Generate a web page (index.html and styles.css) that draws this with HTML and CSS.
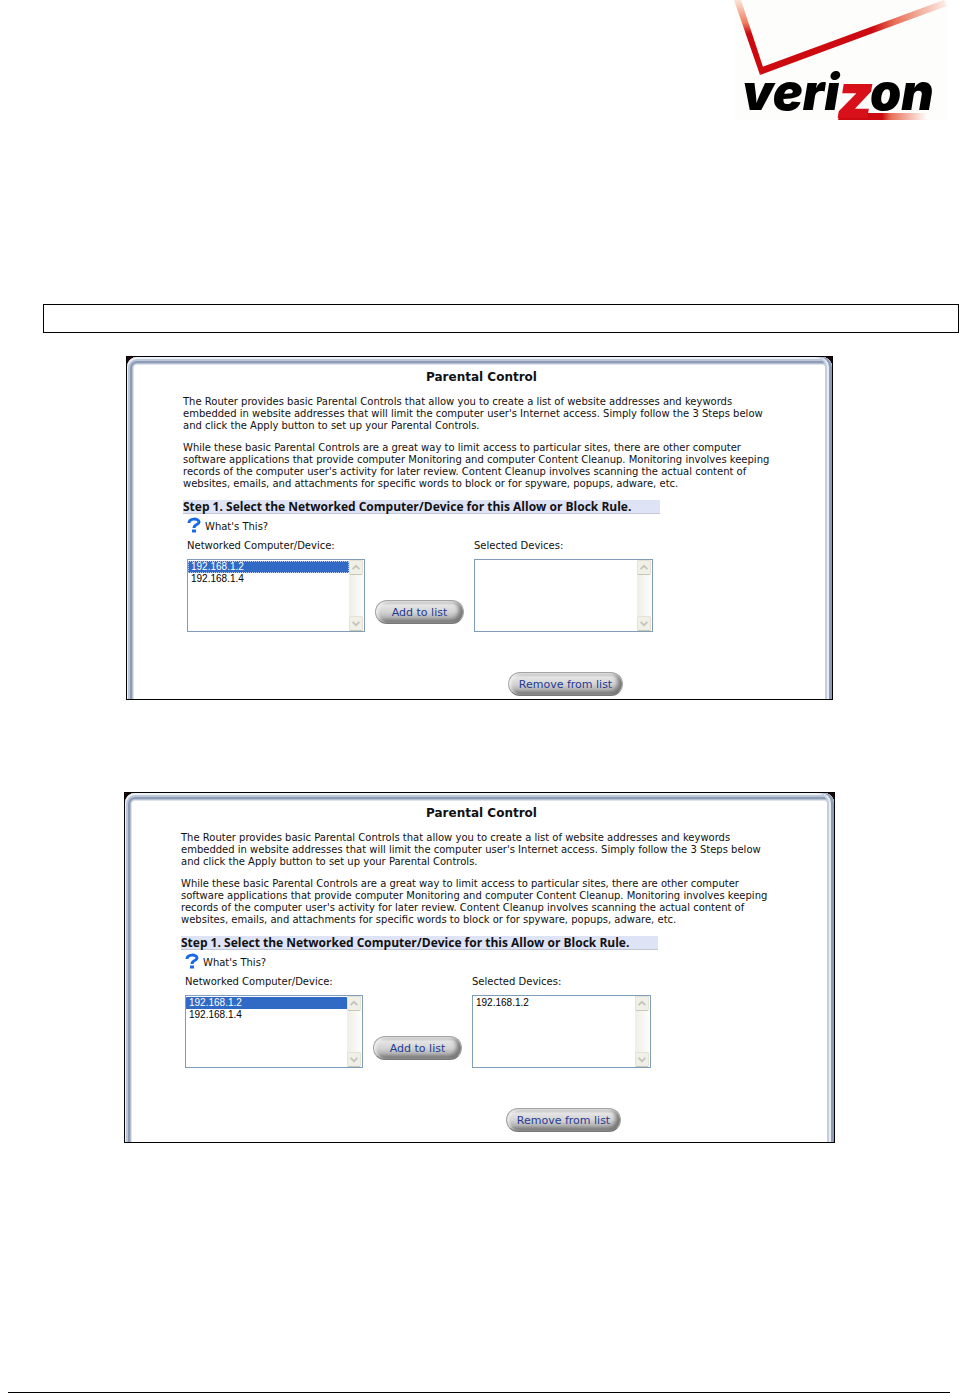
FILE: index.html
```html
<!DOCTYPE html>
<html lang="en">

<head>
    <meta charset="utf-8">
    <title>Parental Control</title>
    <meta name="viewport" content="width=device-width, initial-scale=1.0">
    <link rel="stylesheet" href="styles.css">
</head>

<body>
    <header>
        <svg class="logo" viewBox="0 0 214 120" role="img" aria-label="verizon">
            <defs>
                <linearGradient id="short-stroke" x1="0" y1="0" x2="0" y2="1">
                    <stop offset="0" stop-color="#fbe4d8" />
                    <stop offset="0.3" stop-color="#ee8060" />
                    <stop offset="0.45" stop-color="#cc0a10" />
                </linearGradient>
                <linearGradient id="long-stroke" x1="0" y1="0" x2="1" y2="0">
                    <stop offset="0.6" stop-color="#cc0a10" />
                    <stop offset="0.72" stop-color="#e87058" />
                    <stop offset="1" stop-color="#fdf0e8" />
                </linearGradient>
                <linearGradient id="z-bar" x1="0" y1="0" x2="1" y2="0">
                    <stop offset="0.5" stop-color="#cc0a10" />
                    <stop offset="0.6" stop-color="#e87058" />
                    <stop offset="1" stop-color="#fefaf8" />
                </linearGradient>
            </defs>
            <rect width="214" height="120" fill="#fdfdfb" />
            <path d="M0 0H7L29 67L26 75Z" fill="url(#short-stroke)" />
            <path d="M26 75L28 67L210 0L213 6L142 32Z" fill="url(#long-stroke)" />
            <path d="M106 113H192V120H104Z" fill="url(#z-bar)" />
            <g class="wordmark">
                <text x="8" y="110">veri</text>
                <text x="103" y="118" class="wordmark-z">z</text>
                <text x="136" y="110">on</text>
            </g>
        </svg>
    </header>

    <main>
        <div class="strip"></div>

        <section class="panel">
            <div class="panel-body">
                <h2>Parental Control</h2>
                <p>The Router provides basic Parental Controls that allow you to create a list of website addresses and keywords<br>
                    embedded in website addresses that will limit the computer user's Internet access. Simply follow the 3 Steps below<br>
                    and click the Apply button to set up your Parental Controls.</p>
                <p>While these basic Parental Controls are a great way to limit access to particular sites, there are other computer<br>
                    software applications that provide computer Monitoring and computer Content Cleanup. Monitoring involves keeping<br>
                    records of the computer user's activity for later review. Content Cleanup involves scanning the actual content of<br>
                    websites, emails, and attachments for specific words to block or for spyware, popups, adware, etc.</p>
                <h3>Step 1. Select the Networked Computer/Device for this Allow or Block Rule.</h3>
                <a class="help" href="#">
                    <svg viewBox="0 0 14 16" aria-hidden="true">
                        <path d="M2 6C2 1 12 1 12 5C12 8 7 7 7 11" />
                        <path d="M5 14H9" />
                    </svg>
                    What's This?
                </a>
                <div class="devices">
                    <label for="networked-1">Networked Computer/Device:</label>
                    <label for="selected-1" class="right">Selected Devices:</label>
                    <div class="listbox">
                        <select id="networked-1" size="5" class="focused">
                            <option selected>192.168.1.2</option>
                            <option>192.168.1.4</option>
                        </select>
                        <div class="scrollbar">
                            <svg viewBox="0 0 14 14"><path d="M3 9L7 5L11 9" /></svg>
                            <svg viewBox="0 0 14 14"><path d="M3 5L7 9L11 5" /></svg>
                        </div>
                    </div>
                    <button type="button" class="add">Add to list</button>
                    <div class="listbox">
                        <select id="selected-1" size="5"></select>
                        <div class="scrollbar">
                            <svg viewBox="0 0 14 14"><path d="M3 9L7 5L11 9" /></svg>
                            <svg viewBox="0 0 14 14"><path d="M3 5L7 9L11 5" /></svg>
                        </div>
                    </div>
                    <button type="button" class="remove">Remove from list</button>
                </div>
            </div>
        </section>

        <section class="panel large">
            <div class="panel-body">
                <h2>Parental Control</h2>
                <p>The Router provides basic Parental Controls that allow you to create a list of website addresses and keywords<br>
                    embedded in website addresses that will limit the computer user's Internet access. Simply follow the 3 Steps below<br>
                    and click the Apply button to set up your Parental Controls.</p>
                <p>While these basic Parental Controls are a great way to limit access to particular sites, there are other computer<br>
                    software applications that provide computer Monitoring and computer Content Cleanup. Monitoring involves keeping<br>
                    records of the computer user's activity for later review. Content Cleanup involves scanning the actual content of<br>
                    websites, emails, and attachments for specific words to block or for spyware, popups, adware, etc.</p>
                <h3>Step 1. Select the Networked Computer/Device for this Allow or Block Rule.</h3>
                <a class="help" href="#">
                    <svg viewBox="0 0 14 16" aria-hidden="true">
                        <path d="M2 6C2 1 12 1 12 5C12 8 7 7 7 11" />
                        <path d="M5 14H9" />
                    </svg>
                    What's This?
                </a>
                <div class="devices">
                    <label for="networked-2">Networked Computer/Device:</label>
                    <label for="selected-2" class="right">Selected Devices:</label>
                    <div class="listbox">
                        <select id="networked-2" size="5">
                            <option selected>192.168.1.2</option>
                            <option>192.168.1.4</option>
                        </select>
                        <div class="scrollbar">
                            <svg viewBox="0 0 14 14"><path d="M3 9L7 5L11 9" /></svg>
                            <svg viewBox="0 0 14 14"><path d="M3 5L7 9L11 5" /></svg>
                        </div>
                    </div>
                    <button type="button" class="add">Add to list</button>
                    <div class="listbox">
                        <select id="selected-2" size="5">
                            <option>192.168.1.2</option>
                        </select>
                        <div class="scrollbar">
                            <svg viewBox="0 0 14 14"><path d="M3 9L7 5L11 9" /></svg>
                            <svg viewBox="0 0 14 14"><path d="M3 5L7 9L11 5" /></svg>
                        </div>
                    </div>
                    <button type="button" class="remove">Remove from list</button>
                </div>
            </div>
        </section>
    </main>

    <footer></footer>
</body>

</html>
```
FILE: styles.css
```css
:root {
    --text-color: #111;
    --link-color: #1f3a93;
    --select-color: #316ac5;
    --field-border: #7f9db9;
    --heading-bg: #dfe3f6;
}

* {
    margin: 0;
    padding: 0;
    box-sizing: border-box;
}

body {
    font-family: Verdana, 'DejaVu Sans', sans-serif;
    font-size: 10px;
    line-height: 12px;
    color: var(--text-color);
    background-color: #fff;
    min-height: 100vh;
    display: flex;
    flex-direction: column;
}

header {
    display: flex;
    justify-content: flex-end;
    padding-right: 11px;
}

.logo {
    display: block;
    width: 214px;
    height: 120px;
    overflow: visible;
}

.wordmark {
    font-family: Inter, 'Open Sans', sans-serif;
    font-size: 50px;
    font-weight: 900;
    font-style: italic;
}

.wordmark-z {
    font-size: 62px;
    fill: #d8101a;
}

main {
    flex-grow: 1;
    padding-top: 184px;
}

.strip {
    height: 29px;
    margin-left: 43px;
    border: 1px solid #000;
}

.panel {
    width: 100%;
    max-width: 707px;
    margin: 23px auto 0;
    border: 1px solid #000;
    background-color: #1a0808;
    overflow: hidden;
}

.panel.large {
    max-width: 711px;
    margin-top: 92px;
}

/* runs past the bottom of the panel so the frame stays open there */
.panel-body {
    margin-bottom: -12px;
    padding: 13px 12px 15px 56px;
    background-color: #fff;
    border-radius: 10px 10px 0 0;
    box-shadow: inset -3px 0 0 #8d9cb6, inset -5px 0 0 #e8ecf3, inset -7px 0 0 #c5cedd,
        inset 0 1px 0 1px #eef1f6, inset 0 1px 0 3px #bcc8d8,
        inset 0 1px 0 5px #8d9cb6, inset 0 1px 0 6px #b4bfd0, inset 0 1px 0 7px #dfe4ec;
}

.large .panel-body {
    padding-bottom: 22px;
}

h2 {
    margin: 0 -4px 12px -44px;
    font-size: 12px;
    line-height: 14px;
    text-align: center;
}

p {
    margin-bottom: 10px;
    white-space: nowrap;
}

h3 {
    width: 477px;
    font-family: 'Open Sans', sans-serif;
    font-size: 12px;
    line-height: 13px;
    background-color: var(--heading-bg);
    border-bottom: 1px solid #c4c8d4;
    white-space: nowrap;
}

.help {
    display: flex;
    align-items: flex-end;
    gap: 4px;
    margin: 3px 0 7px 4px;
    color: inherit;
    text-decoration: none;
}

.help svg {
    width: 14px;
    height: 16px;
    fill: none;
    stroke: #1a6ae8;
    stroke-width: 3;
}

.devices {
    display: grid;
    grid-template-columns: 178px 89px 179px;
    column-gap: 10px;
    margin-left: 4px;
}

.devices label {
    margin-bottom: 7px;
}

.devices .right {
    grid-column: 3;
}

.listbox {
    display: flex;
    height: 73px;
    border: 1px solid var(--field-border);
}

.listbox select {
    flex-grow: 1;
    appearance: none;
    border: none;
    outline: none;
    overflow: hidden;
    padding-top: 1px;
    font-family: Tahoma, 'Liberation Sans', sans-serif;
    font-size: 10px;
    color: #000;
    background-color: #fff;
}

.listbox option {
    min-height: 12px;
    padding: 0 3px;
    line-height: 12px;
}

.listbox option:checked {
    color: #fff;
    background: linear-gradient(var(--select-color), var(--select-color));
}

.focused option:checked {
    outline: 1px dotted #b8cdf0;
    outline-offset: -1px;
}

.scrollbar {
    width: 15px;
    display: flex;
    flex-direction: column;
    justify-content: space-between;
    background: linear-gradient(to right, #efeee8, #fdfdfa);
}

.scrollbar svg {
    width: 14px;
    height: 15px;
    border: 1px solid #e4e2d4;
    border-bottom-color: #c8c6b4;
    border-radius: 2px;
    background-color: #f0efe8;
    fill: none;
    stroke: #c6c4ba;
    stroke-width: 2;
}

button {
    height: 24px;
    font-family: inherit;
    font-size: 11px;
    color: var(--link-color);
    border: 1px solid #a4a4a4;
    border-bottom-color: #777;
    border-radius: 12px;
    background: linear-gradient(#b4b4b4, #e4e4e4 20%, #d4d4d4 50%, #b4b4b4 75%, #777);
    box-shadow: inset 2px 1px 3px #eee, inset -4px -2px 4px #777;
    white-space: nowrap;
    cursor: pointer;
}

.add {
    margin-top: 41px;
}

.remove {
    grid-column: 3;
    width: 115px;
    margin: 40px 0 0 34px;
}

footer {
    height: 1px;
    margin: 0 9px 0 8px;
    background-color: #000;
}
```
